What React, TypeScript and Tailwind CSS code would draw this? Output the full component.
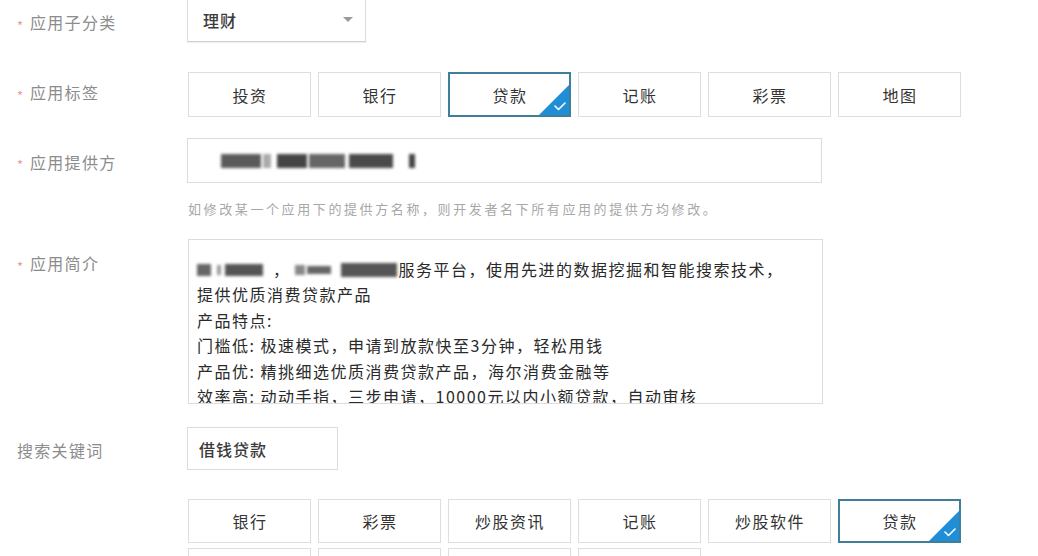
import React from "react";

const FONT = { fontFamily: '"Noto Sans CJK SC", "Noto Sans", sans-serif' };

function Label({ text, required = true }: { text: string; required?: boolean }) {
  return (
    <div className="flex items-center text-[16px] tracking-[1.3px] text-[#8c8c8c]">
      {required ? (
        <span className="w-[13px] translate-y-[3px] text-[13px] leading-none text-[#e89a9a]">*</span>
      ) : null}
      <span>{text}</span>
    </div>
  );
}

function Tag({ text, selected = false }: { text: string; selected?: boolean }) {
  return (
    <div
      className={
        "relative flex h-full w-[123px] items-center justify-center overflow-hidden bg-white text-[16px] tracking-[1.5px] text-[#333] " +
        (selected ? "border-2 border-[#3f7f99]" : "border border-[#dedede]")
      }
    >
      <span className="pl-[1px]">{text}</span>
      {selected ? (
        <svg
          className="absolute bottom-0 right-0"
          width="30"
          height="30"
          viewBox="0 0 30 30"
        >
          <polygon points="30,0 30,30 0,30" fill="#1f8ed6" />
          <path
            d="M16 21 L19.5 24.5 L26 18"
            stroke="#ffffff"
            strokeWidth="1.6"
            fill="none"
            strokeLinecap="round"
            strokeLinejoin="round"
          />
        </svg>
      ) : null}
    </div>
  );
}

function Blur({ w, c = "#555", ml = 0, h = 14 }: { w: number; c?: string; ml?: number; h?: number }) {
  return (
    <span
      className="inline-block align-middle blur-[1.5px]"
      style={{ width: w, height: h, background: c, marginLeft: ml }}
    />
  );
}

export default function App() {
  return (
    <div
      className="relative h-[556px] w-[1038px] overflow-hidden bg-white pl-[17px]"
      style={FONT}
    >
      {/* 应用子分类 */}
      <div className="mt-[-2px] flex h-[44px]">
        <div className="flex w-[170px] items-center pt-[4px]">
          <Label text="应用子分类" />
        </div>
        <div className="flex w-[179px] items-center justify-between border border-[#dcdcdc] border-b-[#cfcfcf] bg-white pl-[15px] pr-[12px] shadow-[0_1px_1px_rgba(0,0,0,0.06)]">
          <span className="text-[16px] font-medium tracking-[1px] text-[#3a3a3a]">理财</span>
          <svg width="10" height="6" viewBox="0 0 10 6">
            <polygon points="0,0 10,0 5,5" fill="#9a9a9a" />
          </svg>
        </div>
      </div>

      {/* 应用标签 */}
      <div className="mt-[30px] flex h-[45px]">
        <div className="w-[171px] pt-[8px]">
          <Label text="应用标签" />
        </div>
        <div className="flex gap-[7px]">
          <Tag text="投资" />
          <Tag text="银行" />
          <Tag text="贷款" selected />
          <Tag text="记账" />
          <Tag text="彩票" />
          <Tag text="地图" />
        </div>
      </div>

      {/* 应用提供方 */}
      <div className="mt-[21px] flex h-[45px]">
        <div className="flex w-[170px] items-center pt-[2px]">
          <Label text="应用提供方" />
        </div>
        <div className="flex w-[635px] items-center border border-[#dcdcdc] pl-[33px]">
          <Blur w={40} c="#5a5a5a" />
          <Blur w={8} c="#aaa" ml={2} />
          <Blur w={30} c="#444" ml={6} />
          <Blur w={36} c="#666" ml={2} />
          <Blur w={44} c="#4a4a4a" ml={4} />
          <Blur w={6} c="#444" ml={16} />
        </div>
      </div>

      {/* hint */}
      <div className="mt-[17px] pl-[171px] text-[13px] leading-[18px] tracking-[2.6px] text-[#a8a8a8]">
        如修改某一个应用下的提供方名称，则开发者名下所有应用的提供方均修改。
      </div>

      {/* 应用简介 */}
      <div className="mt-[21px] flex h-[165px]">
        <div className="w-[171px] pt-[12px]">
          <Label text="应用简介" />
        </div>
        <div className="w-[635px] overflow-hidden border border-[#dcdcdc] pl-[8px] pt-[17px] text-[16px] leading-[25.4px] tracking-[1.5px] text-[#2a2a2a]">
          <div className="flex items-center whitespace-nowrap">
            <Blur w={14} c="#666" h={12} />
            <Blur w={4} c="#999" ml={6} h={10} />
            <Blur w={38} c="#555" ml={4} h={12} />
            <span className="ml-[10px]">，</span>
            <Blur w={10} c="#888" ml={4} h={10} />
            <Blur w={24} c="#666" ml={2} h={8} />
            <Blur w={56} c="#555" ml={10} h={14} />
            <span className="ml-[2px]">服务平台，使用先进的数据挖掘和智能搜索技术，</span>
          </div>
          <div>提供优质消费贷款产品</div>
          <div>产品特点:</div>
          <div>门槛低: 极速模式，申请到放款快至3分钟，轻松用钱</div>
          <div>产品优: 精挑细选优质消费贷款产品，海尔消费金融等</div>
          <div>效率高: 动动手指，三步申请，10000元以内小额贷款，自动审核</div>
        </div>
      </div>

      {/* 搜索关键词 */}
      <div className="mt-[23px] flex h-[43px]">
        <div className="flex w-[170px] items-center pt-[3px]">
          <Label text="搜索关键词" required={false} />
        </div>
        <div className="flex w-[151px] items-center border border-[#dcdcdc] pl-[11px] text-[16px] font-medium tracking-[1px] text-[#3a3a3a]">
          借钱贷款
        </div>
      </div>

      {/* bottom tags */}
      <div className="mt-[29px] flex h-[44px] pl-[171px]">
        <div className="flex gap-[7px]">
          <Tag text="银行" />
          <Tag text="彩票" />
          <Tag text="炒股资讯" />
          <Tag text="记账" />
          <Tag text="炒股软件" />
          <Tag text="贷款" selected />
        </div>
      </div>
      <div className="mt-[5px] flex h-[44px] pl-[171px]">
        <div className="flex gap-[7px]">
          <Tag text="" />
          <Tag text="" />
          <Tag text="" />
          <Tag text="" />
        </div>
      </div>
    </div>
  );
}
